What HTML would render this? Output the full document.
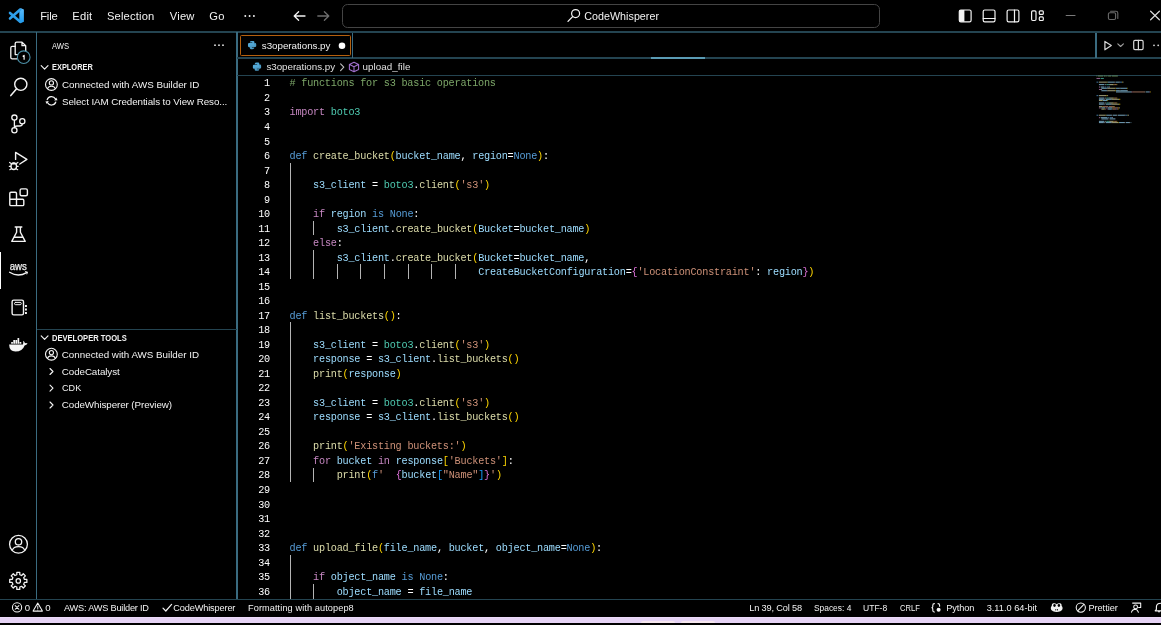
<!DOCTYPE html>
<html><head><meta charset="utf-8"><title>s3operations.py - CodeWhisperer - Visual Studio Code</title>
<style>
html,body{margin:0;padding:0;background:#000;}
body{width:1161px;height:625px;position:relative;overflow:hidden;font-family:"Liberation Sans",sans-serif;}
.t{position:absolute;white-space:pre;line-height:16px;height:16px;}
.c{position:absolute;white-space:pre;font-family:"Liberation Mono",monospace;color:#fff;}
.k{color:#c586c0}.b{color:#569cd6}.f{color:#dcdcaa}.v{color:#9cdcfe}.s{color:#ce9178}.m{color:#4ec9b0}.cm{color:#7ca668}
.b1{color:#ffd700}.b2{color:#da70d6}.b3{color:#179fff}
svg{position:absolute;left:0;top:0;}
#app{position:absolute;left:0;top:0;width:1161px;height:625px;filter:blur(0.45px);}
</style></head><body><div id="app">
<div style="position:absolute;left:-6px;top:31px;width:1173px;height:2px;background:#244451;"></div>
<div style="position:absolute;left:36px;top:32px;width:1.4px;height:568px;background:#3a6b80;"></div>
<div style="position:absolute;left:236.4px;top:32px;width:1.4px;height:568px;background:#3a6b80;"></div>
<div style="position:absolute;left:237px;top:57.4px;width:930px;height:1.6px;background:#244451;"></div>
<div style="position:absolute;left:237px;top:74.6px;width:930px;height:1.6px;background:#244451;"></div>
<div style="position:absolute;left:-6px;top:598.8px;width:1173px;height:1.6px;background:#244451;"></div>
<div style="position:absolute;left:352px;top:33px;width:1.4px;height:25px;background:#3a6b80;"></div>
<div style="position:absolute;left:1095.4px;top:33px;width:1.4px;height:25px;background:#3a6b80;"></div>
<div style="position:absolute;left:37px;top:329px;width:199.5px;height:1.4px;background:#244451;"></div>
<div style="position:absolute;left:651px;top:57px;width:54px;height:1.6px;background:#5a9bb4;"></div>
<div style="position:absolute;left:-6px;top:616.9px;width:1173px;height:6.5px;background:#e6d3f5;"></div>
<div style="position:absolute;left:-6px;top:616.8px;width:1173px;height:1.2px;background:#ecdaf9;"></div>
<div style="position:absolute;left:641px;top:620.6px;width:34px;height:2.7px;background:#f6e6ee;border-radius:2px 2px 0 0;"></div>
<div style="position:absolute;left:681px;top:620.6px;width:34px;height:2.7px;background:#f6e6ee;border-radius:2px 2px 0 0;"></div>
<div style="position:absolute;left:-3px;top:252px;width:4.4px;height:37px;background:#fff;"></div>
<div style="position:absolute;left:239.8px;top:35.4px;width:111.2px;height:20.5px;border:1.2px solid #b4600e;border-radius:1.5px;box-sizing:border-box"></div>
<div style="position:absolute;left:342.4px;top:4px;width:538px;height:23.6px;border:1.4px solid #444;border-radius:5.5px;box-sizing:border-box"></div>
<div style="position:absolute;left:0;top:0;font-size:10.2px;letter-spacing:-0.221px;line-height:14.52px">
<div class="c ln" style="left:258.00px;top:77.44px;width:12px;text-align:right">1</div>
<div class="c" style="left:289.50px;top:77.44px"><span class="cm"># functions for s3 basic operations</span></div>
<div class="c ln" style="left:258.00px;top:91.96px;width:12px;text-align:right">2</div>
<div class="c ln" style="left:258.00px;top:106.48px;width:12px;text-align:right">3</div>
<div class="c" style="left:289.50px;top:106.48px"><span class="k">import</span> <span class="m">boto3</span></div>
<div class="c ln" style="left:258.00px;top:121.00px;width:12px;text-align:right">4</div>
<div class="c ln" style="left:258.00px;top:135.52px;width:12px;text-align:right">5</div>
<div class="c ln" style="left:258.00px;top:150.04px;width:12px;text-align:right">6</div>
<div class="c" style="left:289.50px;top:150.04px"><span class="b">def</span> <span class="f">create_bucket</span><span class="b1">(</span><span class="v">bucket_name</span>, <span class="v">region</span>=<span class="b">None</span><span class="b1">)</span>:</div>
<div class="c ln" style="left:258.00px;top:164.56px;width:12px;text-align:right">7</div>
<div class="c ln" style="left:258.00px;top:179.08px;width:12px;text-align:right">8</div>
<div class="c" style="left:313.10px;top:179.08px"><span class="v">s3_client</span> = <span class="m">boto3</span>.<span class="f">client</span><span class="b1">(</span><span class="s">'s3'</span><span class="b1">)</span></div>
<div class="c ln" style="left:258.00px;top:193.60px;width:12px;text-align:right">9</div>
<div class="c ln" style="left:258.00px;top:208.12px;width:12px;text-align:right">10</div>
<div class="c" style="left:313.10px;top:208.12px"><span class="k">if</span> <span class="v">region</span> <span class="b">is</span> <span class="b">None</span>:</div>
<div class="c ln" style="left:258.00px;top:222.64px;width:12px;text-align:right">11</div>
<div class="c" style="left:336.70px;top:222.64px"><span class="v">s3_client</span>.<span class="f">create_bucket</span><span class="b1">(</span><span class="v">Bucket</span>=<span class="v">bucket_name</span><span class="b1">)</span></div>
<div class="c ln" style="left:258.00px;top:237.16px;width:12px;text-align:right">12</div>
<div class="c" style="left:313.10px;top:237.16px"><span class="k">else</span>:</div>
<div class="c ln" style="left:258.00px;top:251.68px;width:12px;text-align:right">13</div>
<div class="c" style="left:336.70px;top:251.68px"><span class="v">s3_client</span>.<span class="f">create_bucket</span><span class="b1">(</span><span class="v">Bucket</span>=<span class="v">bucket_name</span>,</div>
<div class="c ln" style="left:258.00px;top:266.20px;width:12px;text-align:right">14</div>
<div class="c" style="left:478.30px;top:266.20px"><span class="v">CreateBucketConfiguration</span>=<span class="b2">{</span><span class="s">'LocationConstraint'</span>: <span class="v">region</span><span class="b2">}</span><span class="b1">)</span></div>
<div class="c ln" style="left:258.00px;top:280.72px;width:12px;text-align:right">15</div>
<div class="c ln" style="left:258.00px;top:295.24px;width:12px;text-align:right">16</div>
<div class="c ln" style="left:258.00px;top:309.76px;width:12px;text-align:right">17</div>
<div class="c" style="left:289.50px;top:309.76px"><span class="b">def</span> <span class="f">list_buckets</span><span class="b1">()</span>:</div>
<div class="c ln" style="left:258.00px;top:324.28px;width:12px;text-align:right">18</div>
<div class="c ln" style="left:258.00px;top:338.80px;width:12px;text-align:right">19</div>
<div class="c" style="left:313.10px;top:338.80px"><span class="v">s3_client</span> = <span class="m">boto3</span>.<span class="f">client</span><span class="b1">(</span><span class="s">'s3'</span><span class="b1">)</span></div>
<div class="c ln" style="left:258.00px;top:353.32px;width:12px;text-align:right">20</div>
<div class="c" style="left:313.10px;top:353.32px"><span class="v">response</span> = <span class="v">s3_client</span>.<span class="f">list_buckets</span><span class="b1">()</span></div>
<div class="c ln" style="left:258.00px;top:367.84px;width:12px;text-align:right">21</div>
<div class="c" style="left:313.10px;top:367.84px"><span class="f">print</span><span class="b1">(</span><span class="v">response</span><span class="b1">)</span></div>
<div class="c ln" style="left:258.00px;top:382.36px;width:12px;text-align:right">22</div>
<div class="c ln" style="left:258.00px;top:396.88px;width:12px;text-align:right">23</div>
<div class="c" style="left:313.10px;top:396.88px"><span class="v">s3_client</span> = <span class="m">boto3</span>.<span class="f">client</span><span class="b1">(</span><span class="s">'s3'</span><span class="b1">)</span></div>
<div class="c ln" style="left:258.00px;top:411.40px;width:12px;text-align:right">24</div>
<div class="c" style="left:313.10px;top:411.40px"><span class="v">response</span> = <span class="v">s3_client</span>.<span class="f">list_buckets</span><span class="b1">()</span></div>
<div class="c ln" style="left:258.00px;top:425.92px;width:12px;text-align:right">25</div>
<div class="c ln" style="left:258.00px;top:440.44px;width:12px;text-align:right">26</div>
<div class="c" style="left:313.10px;top:440.44px"><span class="f">print</span><span class="b1">(</span><span class="s">'Existing buckets:'</span><span class="b1">)</span></div>
<div class="c ln" style="left:258.00px;top:454.96px;width:12px;text-align:right">27</div>
<div class="c" style="left:313.10px;top:454.96px"><span class="k">for</span> <span class="v">bucket</span> <span class="k">in</span> <span class="v">response</span><span class="b1">[</span><span class="s">'Buckets'</span><span class="b1">]</span>:</div>
<div class="c ln" style="left:258.00px;top:469.48px;width:12px;text-align:right">28</div>
<div class="c" style="left:336.70px;top:469.48px"><span class="f">print</span><span class="b1">(</span><span class="b">f</span><span class="s">'  </span><span class="b2">{</span><span class="v">bucket</span><span class="b3">[</span><span class="s">"Name"</span><span class="b3">]</span><span class="b2">}</span><span class="s">'</span><span class="b1">)</span></div>
<div class="c ln" style="left:258.00px;top:484.00px;width:12px;text-align:right">29</div>
<div class="c ln" style="left:258.00px;top:498.52px;width:12px;text-align:right">30</div>
<div class="c ln" style="left:258.00px;top:513.04px;width:12px;text-align:right">31</div>
<div class="c ln" style="left:258.00px;top:527.56px;width:12px;text-align:right">32</div>
<div class="c ln" style="left:258.00px;top:542.08px;width:12px;text-align:right">33</div>
<div class="c" style="left:289.50px;top:542.08px"><span class="b">def</span> <span class="f">upload_file</span><span class="b1">(</span><span class="v">file_name</span>, <span class="v">bucket</span>, <span class="v">object_name</span>=<span class="b">None</span><span class="b1">)</span>:</div>
<div class="c ln" style="left:258.00px;top:556.60px;width:12px;text-align:right">34</div>
<div class="c ln" style="left:258.00px;top:571.12px;width:12px;text-align:right">35</div>
<div class="c" style="left:313.10px;top:571.12px"><span class="k">if</span> <span class="v">object_name</span> <span class="b">is</span> <span class="b">None</span>:</div>
<div class="c ln" style="left:258.00px;top:585.64px;width:12px;text-align:right">36</div>
<div class="c" style="left:336.70px;top:585.64px"><span class="v">object_name</span> = <span class="v">file_name</span></div>
</div>
<div style="position:absolute;left:290px;top:162.76px;width:1.1px;height:116.16px;background:#b4b4b4;"></div>
<div style="position:absolute;left:290px;top:322.48px;width:1.1px;height:159.72px;background:#b4b4b4;"></div>
<div style="position:absolute;left:290px;top:554.8px;width:1.1px;height:44.4px;background:#b4b4b4;"></div>
<div style="position:absolute;left:313px;top:220.84px;width:1.1px;height:14.52px;background:#b4b4b4;"></div>
<div style="position:absolute;left:313px;top:249.88px;width:1.1px;height:29.04px;background:#b4b4b4;"></div>
<div style="position:absolute;left:313px;top:467.68px;width:1.1px;height:14.52px;background:#b4b4b4;"></div>
<div style="position:absolute;left:313px;top:583.84px;width:1.1px;height:15.36px;background:#b4b4b4;"></div>
<div style="position:absolute;left:337px;top:264.4px;width:1.1px;height:14.52px;background:#b4b4b4;"></div>
<div style="position:absolute;left:360px;top:264.4px;width:1.1px;height:14.52px;background:#b4b4b4;"></div>
<div style="position:absolute;left:384px;top:264.4px;width:1.1px;height:14.52px;background:#b4b4b4;"></div>
<div style="position:absolute;left:408px;top:264.4px;width:1.1px;height:14.52px;background:#b4b4b4;"></div>
<div style="position:absolute;left:431px;top:264.4px;width:1.1px;height:14.52px;background:#b4b4b4;"></div>
<div style="position:absolute;left:455px;top:264.4px;width:1.1px;height:14.52px;background:#b4b4b4;"></div>
<div class="t" style="left:40.20px;top:8.00px;font-size:11.2px;color:#f2f2f2;letter-spacing:-0.183px;">File</div>
<div class="t" style="left:72.20px;top:8.00px;font-size:11.2px;color:#f2f2f2;letter-spacing:0.255px;">Edit</div>
<div class="t" style="left:106.90px;top:8.00px;font-size:11.2px;color:#f2f2f2;letter-spacing:0.174px;">Selection</div>
<div class="t" style="left:169.70px;top:8.00px;font-size:11.2px;color:#f2f2f2;letter-spacing:0.238px;">View</div>
<div class="t" style="left:209.30px;top:8.00px;font-size:11.2px;color:#f2f2f2;letter-spacing:0.281px;">Go</div>
<div class="t" style="left:584.30px;top:7.60px;font-size:10.7px;color:#f2f2f2;letter-spacing:0.035px;">CodeWhisperer</div>
<div class="t" style="left:52.20px;top:38.00px;font-size:9.3px;color:#f2f2f2;transform:scaleX(0.8204);transform-origin:0 50%;">AWS</div>
<div class="t" style="left:52.30px;top:59.30px;font-size:8.5px;color:#f2f2f2;font-weight:700;transform:scaleX(0.8724);transform-origin:0 50%;">EXPLORER</div>
<div class="t" style="left:62.00px;top:77.00px;font-size:9.8px;color:#f2f2f2;">Connected with AWS Builder ID</div>
<div class="t" style="left:62.00px;top:93.70px;font-size:9.8px;color:#f2f2f2;letter-spacing:-0.076px;">Select IAM Credentials to View Reso...</div>
<div class="t" style="left:52.30px;top:329.50px;font-size:8.5px;color:#f2f2f2;font-weight:700;transform:scaleX(0.8901);transform-origin:0 50%;">DEVELOPER TOOLS</div>
<div class="t" style="left:61.80px;top:346.60px;font-size:9.8px;color:#f2f2f2;letter-spacing:-0.007px;">Connected with AWS Builder ID</div>
<div class="t" style="left:61.80px;top:363.50px;font-size:9.8px;color:#f2f2f2;letter-spacing:-0.084px;">CodeCatalyst</div>
<div class="t" style="left:61.80px;top:380.20px;font-size:9.8px;color:#f2f2f2;transform:scaleX(0.9281);transform-origin:0 50%;">CDK</div>
<div class="t" style="left:61.80px;top:397.00px;font-size:9.8px;color:#f2f2f2;letter-spacing:-0.089px;">CodeWhisperer (Preview)</div>
<div class="t" style="left:261.80px;top:38.00px;font-size:9.8px;color:#f2f2f2;letter-spacing:-0.038px;">s3operations.py</div>
<div class="t" style="left:266.40px;top:59.20px;font-size:9.8px;color:#e0e0e0;letter-spacing:-0.038px;">s3operations.py</div>
<div class="t" style="left:362.50px;top:59.20px;font-size:9.8px;color:#e0e0e0;letter-spacing:0.054px;">upload_file</div>
<div class="t" style="left:24.70px;top:599.80px;font-size:9.6px;color:#f2f2f2;letter-spacing:-0.044px;">0</div>
<div class="t" style="left:45.30px;top:599.80px;font-size:9.6px;color:#f2f2f2;letter-spacing:-0.044px;">0</div>
<div class="t" style="left:64.00px;top:599.80px;font-size:9.2px;color:#f2f2f2;letter-spacing:-0.204px;">AWS: AWS Builder ID</div>
<div class="t" style="left:173.30px;top:599.80px;font-size:9.2px;color:#f2f2f2;letter-spacing:-0.141px;">CodeWhisperer</div>
<div class="t" style="left:248.00px;top:599.80px;font-size:9.2px;color:#f2f2f2;letter-spacing:0.088px;">Formatting with autopep8</div>
<div class="t" style="left:749.20px;top:599.80px;font-size:9.2px;color:#f2f2f2;letter-spacing:-0.143px;">Ln 39, Col 58</div>
<div class="t" style="left:813.60px;top:599.80px;font-size:9.2px;color:#f2f2f2;transform:scaleX(0.9129);transform-origin:0 50%;">Spaces: 4</div>
<div class="t" style="left:863.20px;top:599.80px;font-size:9.2px;color:#f2f2f2;transform:scaleX(0.9297);transform-origin:0 50%;">UTF-8</div>
<div class="t" style="left:899.80px;top:599.80px;font-size:9.2px;color:#f2f2f2;transform:scaleX(0.8250);transform-origin:0 50%;">CRLF</div>
<div class="t" style="left:946.20px;top:599.80px;font-size:9.2px;color:#f2f2f2;letter-spacing:-0.068px;">Python</div>
<div class="t" style="left:986.70px;top:599.80px;font-size:9.2px;color:#f2f2f2;letter-spacing:0.007px;">3.11.0 64-bit</div>
<div class="t" style="left:1088.40px;top:599.80px;font-size:9.2px;color:#f2f2f2;letter-spacing:-0.028px;">Prettier</div>
<svg width="1161" height="625" viewBox="0 0 1161 625" fill="none" stroke-linecap="round" stroke-linejoin="round">
<g opacity="0.7" stroke="none"><rect x="1096.50" y="75.50" width="0.61" height="1.05" fill="#7ca668"/><rect x="1097.72" y="75.50" width="5.49" height="1.05" fill="#7ca668"/><rect x="1103.82" y="75.50" width="1.83" height="1.05" fill="#7ca668"/><rect x="1106.26" y="75.50" width="1.22" height="1.05" fill="#7ca668"/><rect x="1108.09" y="75.50" width="3.05" height="1.05" fill="#7ca668"/><rect x="1111.75" y="75.50" width="6.10" height="1.05" fill="#7ca668"/><rect x="1096.50" y="77.95" width="3.66" height="1.05" fill="#c586c0"/><rect x="1100.77" y="77.95" width="3.05" height="1.05" fill="#4ec9b0"/><rect x="1096.50" y="81.62" width="1.83" height="1.05" fill="#569cd6"/><rect x="1098.94" y="81.62" width="7.93" height="1.05" fill="#dcdcaa"/><rect x="1106.87" y="81.62" width="0.61" height="1.05" fill="#ffd700"/><rect x="1107.48" y="81.62" width="6.71" height="1.05" fill="#9cdcfe"/><rect x="1114.19" y="81.62" width="0.61" height="1.05" fill="#ffffff"/><rect x="1115.41" y="81.62" width="3.66" height="1.05" fill="#9cdcfe"/><rect x="1119.07" y="81.62" width="0.61" height="1.05" fill="#ffffff"/><rect x="1119.68" y="81.62" width="2.44" height="1.05" fill="#569cd6"/><rect x="1122.12" y="81.62" width="0.61" height="1.05" fill="#ffd700"/><rect x="1122.73" y="81.62" width="0.61" height="1.05" fill="#ffffff"/><rect x="1098.94" y="84.08" width="5.49" height="1.05" fill="#9cdcfe"/><rect x="1105.04" y="84.08" width="0.61" height="1.05" fill="#ffffff"/><rect x="1106.26" y="84.08" width="3.05" height="1.05" fill="#4ec9b0"/><rect x="1109.31" y="84.08" width="0.61" height="1.05" fill="#ffffff"/><rect x="1109.92" y="84.08" width="3.66" height="1.05" fill="#dcdcaa"/><rect x="1113.58" y="84.08" width="0.61" height="1.05" fill="#ffd700"/><rect x="1114.19" y="84.08" width="2.44" height="1.05" fill="#ce9178"/><rect x="1116.63" y="84.08" width="0.61" height="1.05" fill="#ffd700"/><rect x="1098.94" y="86.53" width="1.22" height="1.05" fill="#c586c0"/><rect x="1100.77" y="86.53" width="3.66" height="1.05" fill="#9cdcfe"/><rect x="1105.04" y="86.53" width="1.22" height="1.05" fill="#569cd6"/><rect x="1106.87" y="86.53" width="2.44" height="1.05" fill="#569cd6"/><rect x="1109.31" y="86.53" width="0.61" height="1.05" fill="#ffffff"/><rect x="1101.38" y="87.75" width="5.49" height="1.05" fill="#9cdcfe"/><rect x="1106.87" y="87.75" width="0.61" height="1.05" fill="#ffffff"/><rect x="1107.48" y="87.75" width="7.93" height="1.05" fill="#dcdcaa"/><rect x="1115.41" y="87.75" width="0.61" height="1.05" fill="#ffd700"/><rect x="1116.02" y="87.75" width="3.66" height="1.05" fill="#9cdcfe"/><rect x="1119.68" y="87.75" width="0.61" height="1.05" fill="#ffffff"/><rect x="1120.29" y="87.75" width="6.71" height="1.05" fill="#9cdcfe"/><rect x="1127.00" y="87.75" width="0.61" height="1.05" fill="#ffd700"/><rect x="1098.94" y="88.97" width="2.44" height="1.05" fill="#c586c0"/><rect x="1101.38" y="88.97" width="0.61" height="1.05" fill="#ffffff"/><rect x="1101.38" y="90.20" width="5.49" height="1.05" fill="#9cdcfe"/><rect x="1106.87" y="90.20" width="0.61" height="1.05" fill="#ffffff"/><rect x="1107.48" y="90.20" width="7.93" height="1.05" fill="#dcdcaa"/><rect x="1115.41" y="90.20" width="0.61" height="1.05" fill="#ffd700"/><rect x="1116.02" y="90.20" width="3.66" height="1.05" fill="#9cdcfe"/><rect x="1119.68" y="90.20" width="0.61" height="1.05" fill="#ffffff"/><rect x="1120.29" y="90.20" width="6.71" height="1.05" fill="#9cdcfe"/><rect x="1127.00" y="90.20" width="0.61" height="1.05" fill="#ffffff"/><rect x="1116.02" y="91.42" width="15.25" height="1.05" fill="#9cdcfe"/><rect x="1131.27" y="91.42" width="0.61" height="1.05" fill="#ffffff"/><rect x="1131.88" y="91.42" width="0.61" height="1.05" fill="#da70d6"/><rect x="1132.49" y="91.42" width="12.20" height="1.05" fill="#ce9178"/><rect x="1144.69" y="91.42" width="0.61" height="1.05" fill="#ffffff"/><rect x="1145.91" y="91.42" width="3.66" height="1.05" fill="#9cdcfe"/><rect x="1149.57" y="91.42" width="0.61" height="1.05" fill="#da70d6"/><rect x="1150.18" y="91.42" width="0.61" height="1.05" fill="#ffd700"/><rect x="1096.50" y="95.10" width="1.83" height="1.05" fill="#569cd6"/><rect x="1098.94" y="95.10" width="7.32" height="1.05" fill="#dcdcaa"/><rect x="1106.26" y="95.10" width="1.22" height="1.05" fill="#ffd700"/><rect x="1107.48" y="95.10" width="0.61" height="1.05" fill="#ffffff"/><rect x="1098.94" y="97.55" width="5.49" height="1.05" fill="#9cdcfe"/><rect x="1105.04" y="97.55" width="0.61" height="1.05" fill="#ffffff"/><rect x="1106.26" y="97.55" width="3.05" height="1.05" fill="#4ec9b0"/><rect x="1109.31" y="97.55" width="0.61" height="1.05" fill="#ffffff"/><rect x="1109.92" y="97.55" width="3.66" height="1.05" fill="#dcdcaa"/><rect x="1113.58" y="97.55" width="0.61" height="1.05" fill="#ffd700"/><rect x="1114.19" y="97.55" width="2.44" height="1.05" fill="#ce9178"/><rect x="1116.63" y="97.55" width="0.61" height="1.05" fill="#ffd700"/><rect x="1098.94" y="98.78" width="4.88" height="1.05" fill="#9cdcfe"/><rect x="1104.43" y="98.78" width="0.61" height="1.05" fill="#ffffff"/><rect x="1105.65" y="98.78" width="5.49" height="1.05" fill="#9cdcfe"/><rect x="1111.14" y="98.78" width="0.61" height="1.05" fill="#ffffff"/><rect x="1111.75" y="98.78" width="7.32" height="1.05" fill="#dcdcaa"/><rect x="1119.07" y="98.78" width="1.22" height="1.05" fill="#ffd700"/><rect x="1098.94" y="100.00" width="3.05" height="1.05" fill="#dcdcaa"/><rect x="1101.99" y="100.00" width="0.61" height="1.05" fill="#ffd700"/><rect x="1102.60" y="100.00" width="4.88" height="1.05" fill="#9cdcfe"/><rect x="1107.48" y="100.00" width="0.61" height="1.05" fill="#ffd700"/><rect x="1098.94" y="102.45" width="5.49" height="1.05" fill="#9cdcfe"/><rect x="1105.04" y="102.45" width="0.61" height="1.05" fill="#ffffff"/><rect x="1106.26" y="102.45" width="3.05" height="1.05" fill="#4ec9b0"/><rect x="1109.31" y="102.45" width="0.61" height="1.05" fill="#ffffff"/><rect x="1109.92" y="102.45" width="3.66" height="1.05" fill="#dcdcaa"/><rect x="1113.58" y="102.45" width="0.61" height="1.05" fill="#ffd700"/><rect x="1114.19" y="102.45" width="2.44" height="1.05" fill="#ce9178"/><rect x="1116.63" y="102.45" width="0.61" height="1.05" fill="#ffd700"/><rect x="1098.94" y="103.67" width="4.88" height="1.05" fill="#9cdcfe"/><rect x="1104.43" y="103.67" width="0.61" height="1.05" fill="#ffffff"/><rect x="1105.65" y="103.67" width="5.49" height="1.05" fill="#9cdcfe"/><rect x="1111.14" y="103.67" width="0.61" height="1.05" fill="#ffffff"/><rect x="1111.75" y="103.67" width="7.32" height="1.05" fill="#dcdcaa"/><rect x="1119.07" y="103.67" width="1.22" height="1.05" fill="#ffd700"/><rect x="1098.94" y="106.12" width="3.05" height="1.05" fill="#dcdcaa"/><rect x="1101.99" y="106.12" width="0.61" height="1.05" fill="#ffd700"/><rect x="1102.60" y="106.12" width="5.49" height="1.05" fill="#ce9178"/><rect x="1108.70" y="106.12" width="5.49" height="1.05" fill="#ce9178"/><rect x="1114.19" y="106.12" width="0.61" height="1.05" fill="#ffd700"/><rect x="1098.94" y="107.35" width="1.83" height="1.05" fill="#c586c0"/><rect x="1101.38" y="107.35" width="3.66" height="1.05" fill="#9cdcfe"/><rect x="1105.65" y="107.35" width="1.22" height="1.05" fill="#c586c0"/><rect x="1107.48" y="107.35" width="4.88" height="1.05" fill="#9cdcfe"/><rect x="1112.36" y="107.35" width="0.61" height="1.05" fill="#ffd700"/><rect x="1112.97" y="107.35" width="5.49" height="1.05" fill="#ce9178"/><rect x="1118.46" y="107.35" width="0.61" height="1.05" fill="#ffd700"/><rect x="1119.07" y="107.35" width="0.61" height="1.05" fill="#ffffff"/><rect x="1101.38" y="108.58" width="3.05" height="1.05" fill="#dcdcaa"/><rect x="1104.43" y="108.58" width="0.61" height="1.05" fill="#ffd700"/><rect x="1105.04" y="108.58" width="0.61" height="1.05" fill="#569cd6"/><rect x="1105.65" y="108.58" width="0.61" height="1.05" fill="#ce9178"/><rect x="1107.48" y="108.58" width="0.61" height="1.05" fill="#da70d6"/><rect x="1108.09" y="108.58" width="3.66" height="1.05" fill="#9cdcfe"/><rect x="1111.75" y="108.58" width="0.61" height="1.05" fill="#179fff"/><rect x="1112.36" y="108.58" width="3.66" height="1.05" fill="#ce9178"/><rect x="1116.02" y="108.58" width="0.61" height="1.05" fill="#179fff"/><rect x="1116.63" y="108.58" width="0.61" height="1.05" fill="#da70d6"/><rect x="1117.24" y="108.58" width="0.61" height="1.05" fill="#ce9178"/><rect x="1117.85" y="108.58" width="0.61" height="1.05" fill="#ffd700"/><rect x="1096.50" y="114.70" width="1.83" height="1.05" fill="#569cd6"/><rect x="1098.94" y="114.70" width="6.71" height="1.05" fill="#dcdcaa"/><rect x="1105.65" y="114.70" width="0.61" height="1.05" fill="#ffd700"/><rect x="1106.26" y="114.70" width="5.49" height="1.05" fill="#9cdcfe"/><rect x="1111.75" y="114.70" width="0.61" height="1.05" fill="#ffffff"/><rect x="1112.97" y="114.70" width="3.66" height="1.05" fill="#9cdcfe"/><rect x="1116.63" y="114.70" width="0.61" height="1.05" fill="#ffffff"/><rect x="1117.85" y="114.70" width="6.71" height="1.05" fill="#9cdcfe"/><rect x="1124.56" y="114.70" width="0.61" height="1.05" fill="#ffffff"/><rect x="1125.17" y="114.70" width="2.44" height="1.05" fill="#569cd6"/><rect x="1127.61" y="114.70" width="0.61" height="1.05" fill="#ffd700"/><rect x="1128.22" y="114.70" width="0.61" height="1.05" fill="#ffffff"/><rect x="1098.94" y="117.15" width="1.22" height="1.05" fill="#c586c0"/><rect x="1100.77" y="117.15" width="6.71" height="1.05" fill="#9cdcfe"/><rect x="1108.09" y="117.15" width="1.22" height="1.05" fill="#569cd6"/><rect x="1109.92" y="117.15" width="2.44" height="1.05" fill="#569cd6"/><rect x="1112.36" y="117.15" width="0.61" height="1.05" fill="#ffffff"/><rect x="1101.38" y="118.38" width="6.71" height="1.05" fill="#9cdcfe"/><rect x="1108.70" y="118.38" width="0.61" height="1.05" fill="#ffffff"/><rect x="1109.92" y="118.38" width="5.49" height="1.05" fill="#9cdcfe"/><rect x="1098.94" y="120.83" width="5.49" height="1.05" fill="#9cdcfe"/><rect x="1105.04" y="120.83" width="0.61" height="1.05" fill="#ffffff"/><rect x="1106.26" y="120.83" width="3.05" height="1.05" fill="#4ec9b0"/><rect x="1109.31" y="120.83" width="0.61" height="1.05" fill="#ffffff"/><rect x="1109.92" y="120.83" width="3.66" height="1.05" fill="#dcdcaa"/><rect x="1113.58" y="120.83" width="0.61" height="1.05" fill="#ffd700"/><rect x="1114.19" y="120.83" width="2.44" height="1.05" fill="#ce9178"/><rect x="1116.63" y="120.83" width="0.61" height="1.05" fill="#ffd700"/><rect x="1098.94" y="122.05" width="4.88" height="1.05" fill="#9cdcfe"/><rect x="1104.43" y="122.05" width="0.61" height="1.05" fill="#ffffff"/><rect x="1105.65" y="122.05" width="5.49" height="1.05" fill="#9cdcfe"/><rect x="1111.14" y="122.05" width="0.61" height="1.05" fill="#ffffff"/><rect x="1111.75" y="122.05" width="6.71" height="1.05" fill="#dcdcaa"/><rect x="1118.46" y="122.05" width="0.61" height="1.05" fill="#ffd700"/><rect x="1119.07" y="122.05" width="5.49" height="1.05" fill="#9cdcfe"/><rect x="1124.56" y="122.05" width="0.61" height="1.05" fill="#ffffff"/><rect x="1125.78" y="122.05" width="3.66" height="1.05" fill="#9cdcfe"/><rect x="1129.44" y="122.05" width="0.61" height="1.05" fill="#ffffff"/><rect x="1130.66" y="122.05" width="0.61" height="1.05" fill="#9cdcfe"/></g>
<defs><linearGradient id="vg" x1="0" y1="0" x2="0" y2="1"><stop offset="0" stop-color="#5cbcfb"/><stop offset="1" stop-color="#1f9cf0"/></linearGradient></defs>
<path d="M19.3 9.0 L21.0 8.2 L23.9 9.6 L23.9 21.8 L21.0 23.1 L19.3 22.3 Z" fill="url(#vg)" stroke="none" />
<path d="M10.0 12.9 L20.2 21.8" stroke="#2b9de8" stroke-width="2.6" />
<path d="M10.0 18.5 L20.2 9.6" stroke="#2f9fea" stroke-width="2.6" />
<circle cx="245.3" cy="16" r="0.95" fill="#f4f4f4"/>
<circle cx="249.6" cy="16" r="0.95" fill="#f4f4f4"/>
<circle cx="253.9" cy="16" r="0.95" fill="#f4f4f4"/>
<path d="M305 16 H294.2 M298.6 11.8 L294.2 16 L298.6 20.2" stroke="#f4f4f4" stroke-width="1.3" />
<path d="M317.8 16 H328.8 M324.4 11.8 L328.8 16 L324.4 20.2" stroke="#6e6e6e" stroke-width="1.3" />
<circle cx="575.6" cy="13.6" r="4.0" stroke="#f4f4f4" stroke-width="1.2" fill="none"/>
<path d="M572.6 16.6 L568 21.4" stroke="#f4f4f4" stroke-width="1.3" />
<rect x="959.3" y="10.0" width="11.8" height="11.8" rx="1.6" stroke="#f4f4f4" stroke-width="1.2" fill="none"/>
<path d="M959.3 11 Q959.3 10 960.3 10 H964.4 V21.8 H960.3 Q959.3 21.8 959.3 20.8 Z" fill="#f4f4f4" stroke="none" />
<rect x="983.2" y="10.0" width="11.8" height="11.8" rx="1.6" stroke="#f4f4f4" stroke-width="1.2" fill="none"/>
<path d="M983.2 18.5 H995" stroke="#f4f4f4" stroke-width="1.2" />
<rect x="1007.1" y="10.0" width="11.8" height="11.8" rx="1.6" stroke="#f4f4f4" stroke-width="1.2" fill="none"/>
<path d="M1014.5 10 V21.8" stroke="#f4f4f4" stroke-width="1.2" />
<rect x="1031.6" y="10.8" width="4.4" height="9.7" rx="1.2" stroke="#f4f4f4" stroke-width="1.2" fill="none"/>
<rect x="1039.3" y="10.8" width="4.0" height="3.6" rx="1" stroke="#f4f4f4" stroke-width="1.2" fill="none"/>
<rect x="1039.3" y="16.9" width="4.0" height="3.6" rx="1" stroke="#f4f4f4" stroke-width="1.2" fill="none"/>
<path d="M1066.2 15.5 H1075" stroke="#7a7a7a" stroke-width="1.1" />
<rect x="1108.4" y="12.7" width="7.2" height="6.8" rx="1.4" stroke="#6a6a6a" stroke-width="1.1" fill="none"/>
<path d="M1110.6 11.2 H1116 Q1117.8 11.2 1117.8 13 V18.4" stroke="#6a6a6a" stroke-width="1.1" />
<path d="M1150.6 11.2 L1159.4 19.8 M1159.4 11.2 L1150.6 19.8" stroke="#dcdcdc" stroke-width="1.2" />
<path d="M1104.9 41.4 V49.8 L1111.3 45.5 Z" stroke="#d8d8d8" stroke-width="1.2" />
<path d="M1117.8 43.8 L1120.6 46.5 L1123.4 43.8" stroke="#a0a0a0" stroke-width="1.1" />
<rect x="1133.7" y="40.4" width="9.4" height="9.2" rx="1.3" stroke="#d8d8d8" stroke-width="1.2" fill="none"/>
<path d="M1138.4 40.4 V49.6" stroke="#d8d8d8" stroke-width="1.2" />
<circle cx="1154" cy="45.3" r="0.9" fill="#d8d8d8"/>
<circle cx="1158.2" cy="45.3" r="0.9" fill="#d8d8d8"/>
<path d="M16.6 42.1 H22 L25.7 45.7 V53.5 M22 42.1 V45.7 H25.7 M15.2 54.6 V43.5 Q15.2 42.1 16.6 42.1 M15.2 54.6 H18" stroke="#f4f4f4" stroke-width="1.3" />
<path d="M15.2 46.4 H12.2 Q10.8 46.4 10.8 47.8 V57.4 Q10.8 58.8 12.2 58.8 H17" stroke="#f4f4f4" stroke-width="1.3" />
<circle cx="23.7" cy="57.2" r="6.35" stroke="#4c8fa6" stroke-width="1.1" fill="#000"/>
<path d="M22.7 56.5 L24.1 55.4 V59.7" stroke="#fff" stroke-width="1.15" stroke-linecap="butt"/>
<circle cx="20.8" cy="84.3" r="6.1" stroke="#f4f4f4" stroke-width="1.4" fill="none"/>
<path d="M16.4 88.9 L10.8 95.6" stroke="#f4f4f4" stroke-width="1.5" />
<circle cx="14.4" cy="117.6" r="2.6" stroke="#f4f4f4" stroke-width="1.3" fill="none"/>
<circle cx="14.4" cy="130.3" r="2.6" stroke="#f4f4f4" stroke-width="1.3" fill="none"/>
<circle cx="22.3" cy="121.2" r="2.6" stroke="#f4f4f4" stroke-width="1.3" fill="none"/>
<path d="M14.4 120.3 V127.6 M22.3 123.9 Q22.3 126 19.4 126 H17 Q14.6 126 14.4 127.6" stroke="#f4f4f4" stroke-width="1.3" />
<path d="M15.6 159.4 V152.4 L26.9 159.4 L19.8 164" stroke="#f4f4f4" stroke-width="1.4" />
<ellipse cx="13.75" cy="166.2" rx="2.8" ry="3.3" stroke="#f4f4f4" stroke-width="1.3" fill="none"/>
<path d="M11.1 164.6 Q11.4 162.4 13.75 162.4 Q16.1 162.4 16.4 164.6 Z" fill="#f4f4f4" stroke="none" />
<path d="M11.2 163.4 L9.6 162.4 M16.3 163.4 L17.9 162.4 M10.9 166.3 H9.3 M16.6 166.3 H18.2 M11.4 168.7 L9.8 169.7 M16.1 168.7 L17.7 169.7" stroke="#f4f4f4" stroke-width="1.15" />
<path d="M9.8 199.2 V193.4 Q9.8 192.2 11 192.2 H15.3 Q16.5 192.2 16.5 193.4 V205.6 M9.8 199.2 H22.6 Q23.8 199.2 23.8 200.4 V204.4 Q23.8 205.6 22.6 205.6 H11 Q9.8 205.6 9.8 204.4 Z" stroke="#f4f4f4" stroke-width="1.4" />
<rect x="20.1" y="188.9" width="7.3" height="6.8" rx="1.5" stroke="#f4f4f4" stroke-width="1.4" fill="none"/>
<path d="M15.2 227 H21.8 M16.6 227 V232.2 L11.8 241.4 H25.2 L20.4 232.2 V227 M13.9 237.2 H23.1" stroke="#f4f4f4" stroke-width="1.4" />
<text x="18.3" y="270.3" font-family="Liberation Sans" font-size="10" font-weight="400" fill="#ececec" text-anchor="middle" stroke="#ececec" stroke-width="0.25" textLength="17.2" lengthAdjust="spacingAndGlyphs">aws</text>
<path d="M9.6 272.3 Q18 277.6 26.6 272.6" stroke="#f4f4f4" stroke-width="1.3" />
<path d="M25.4 271.6 L27.6 272 L26.9 274" stroke="#f4f4f4" stroke-width="0.9" />
<rect x="12.1" y="300.1" width="11.4" height="14.8" rx="1.6" stroke="#f4f4f4" stroke-width="1.4" fill="none"/>
<rect x="14.5" y="302.4" width="6.8" height="2.3" rx="1.15" stroke="#f4f4f4" stroke-width="1.0" fill="none"/>
<path d="M25 305 h1.9 v1.9 h-1.9 Z" fill="#f4f4f4" stroke="none" />
<path d="M25 308.5 h1.9 v1.9 h-1.9 Z" fill="#f4f4f4" stroke="none" />
<path d="M25 312 h1.9 v1.9 h-1.9 Z" fill="#f4f4f4" stroke="none" />
<path d="M9.1 344.4 H23.0 Q23.6 342.2 23.0 340.8 Q24.6 341.6 25.0 343.2 Q26.6 342.8 27.6 343.6 Q26.6 345.4 24.6 345.4 Q22.6 351.4 15.4 351.4 Q9.4 351.4 9.1 344.4 Z" fill="#f4f4f4" stroke="none" />
<path d="M11.2 341.9 h1.7 v1.9 h-1.7 Z M13.3 340 h1.7 v3.8 h-1.7 Z M15.4 340 h1.7 v3.8 h-1.7 Z M17.5 338 h1.7 v5.8 h-1.7 Z M19.6 341.9 h1.7 v1.9 h-1.7 Z" fill="#f4f4f4" stroke="none" />
<circle cx="18.5" cy="544.3" r="8.9" stroke="#f4f4f4" stroke-width="1.3" fill="none"/>
<circle cx="18.5" cy="541.8" r="3.2" stroke="#f4f4f4" stroke-width="1.3" fill="none"/>
<path d="M12.3 550.4 Q13.4 546.6 18.5 546.6 Q23.6 546.6 24.7 550.4" stroke="#f4f4f4" stroke-width="1.3" />
<path d="M16.80 572.33 L19.80 572.33 L19.77 574.77 L21.59 575.53 L23.30 573.78 L25.42 575.90 L23.67 577.61 L24.43 579.43 L26.87 579.40 L26.87 582.40 L24.43 582.37 L23.67 584.19 L25.42 585.90 L23.30 588.02 L21.59 586.27 L19.77 587.03 L19.80 589.47 L16.80 589.47 L16.83 587.03 L15.01 586.27 L13.30 588.02 L11.18 585.90 L12.93 584.19 L12.17 582.37 L9.73 582.40 L9.73 579.40 L12.17 579.43 L12.93 577.61 L11.18 575.90 L13.30 573.78 L15.01 575.53 L16.83 574.77 Z" stroke="#f4f4f4" stroke-width="1.25" />
<circle cx="18.3" cy="580.9" r="2.2" stroke="#f4f4f4" stroke-width="1.25" fill="none"/>
<circle cx="215" cy="45.2" r="0.85" fill="#f4f4f4"/>
<circle cx="219" cy="45.2" r="0.85" fill="#f4f4f4"/>
<circle cx="223" cy="45.2" r="0.85" fill="#f4f4f4"/>
<path d="M41.2 65.7 L44.6 69.2 L48 65.7" stroke="#f4f4f4" stroke-width="1.15" />
<path d="M41.2 335.9 L44.6 339.4 L48 335.9" stroke="#f4f4f4" stroke-width="1.15" />
<circle cx="51.4" cy="84.5" r="5.9" stroke="#f4f4f4" stroke-width="1.1" fill="none"/>
<circle cx="51.4" cy="82.9" r="2.1" stroke="#f4f4f4" stroke-width="1.1" fill="none"/>
<path d="M47.5 88.7 Q48.199999999999996 86.2 51.4 86.2 Q54.6 86.2 55.3 88.7" stroke="#f4f4f4" stroke-width="1.1" />
<circle cx="51.4" cy="354.2" r="5.9" stroke="#f4f4f4" stroke-width="1.1" fill="none"/>
<circle cx="51.4" cy="352.59999999999997" r="2.1" stroke="#f4f4f4" stroke-width="1.1" fill="none"/>
<path d="M47.5 358.4 Q48.199999999999996 355.9 51.4 355.9 Q54.6 355.9 55.3 358.4" stroke="#f4f4f4" stroke-width="1.1" />
<path d="M47.2 99.6 A4.5 4.5 0 0 1 55.4 98.9 M55.8 102.0 A4.5 4.5 0 0 1 47.6 102.7" stroke="#f4f4f4" stroke-width="1.2" />
<path d="M54.2 100.6 L57.6 100.2 L56.2 97.6 Z M48.8 101.0 L45.4 101.4 L46.8 104 Z" fill="#f4f4f4" stroke="none" />
<path d="M50 368.5 L53 371.5 L50 374.5" stroke="#f4f4f4" stroke-width="1.1" />
<path d="M50 385.2 L53 388.2 L50 391.2" stroke="#f4f4f4" stroke-width="1.1" />
<path d="M50 402 L53 405 L50 408" stroke="#f4f4f4" stroke-width="1.1" />
<g transform="translate(252.1 45.1) scale(0.96)" fill="#52a8d6" stroke="none"><path d="M-0.3 -4.3 H1.2 Q2.4 -4.3 2.4 -3.1 V-0.6 Q2.4 0.5 1.3 0.5 H-1.3 Q-2.2 0.5 -2.2 1.4 V2.2 H-3.1 Q-4.3 2.2 -4.3 1 V-0.9 Q-4.3 -2.1 -3.1 -2.1 H0.2 V-2.6 H-2.3 V-3.1 Q-2.3 -4.3 -0.3 -4.3 Z"/><path d="M0.3 4.3 H-1.2 Q-2.4 4.3 -2.4 3.1 V0.6 Q-2.4 -0.5 -1.3 -0.5 H1.3 Q2.2 -0.5 2.2 -1.4 V-2.2 H3.1 Q4.3 -2.2 4.3 -1 V0.9 Q4.3 2.1 3.1 2.1 H-0.2 V2.6 H2.3 V3.1 Q2.3 4.3 0.3 4.3 Z" opacity="0.92"/></g>
<g transform="translate(257 66.7) scale(0.96)" fill="#52a8d6" stroke="none"><path d="M-0.3 -4.3 H1.2 Q2.4 -4.3 2.4 -3.1 V-0.6 Q2.4 0.5 1.3 0.5 H-1.3 Q-2.2 0.5 -2.2 1.4 V2.2 H-3.1 Q-4.3 2.2 -4.3 1 V-0.9 Q-4.3 -2.1 -3.1 -2.1 H0.2 V-2.6 H-2.3 V-3.1 Q-2.3 -4.3 -0.3 -4.3 Z"/><path d="M0.3 4.3 H-1.2 Q-2.4 4.3 -2.4 3.1 V0.6 Q-2.4 -0.5 -1.3 -0.5 H1.3 Q2.2 -0.5 2.2 -1.4 V-2.2 H3.1 Q4.3 -2.2 4.3 -1 V0.9 Q4.3 2.1 3.1 2.1 H-0.2 V2.6 H2.3 V3.1 Q2.3 4.3 0.3 4.3 Z" opacity="0.92"/></g>
<circle cx="342" cy="45.7" r="3.3" fill="#fff"/>
<path d="M340.6 63.8 L343.8 67.2 L340.6 70.6" stroke="#c0c0c0" stroke-width="1.1" />
<path d="M354 62.2 L358.6 64.4 V69.6 L354 71.8 L349.4 69.6 V64.4 Z M349.6 64.5 L354 66.7 L358.4 64.5 M354 66.7 V71.6" stroke="#9f6fcb" stroke-width="1.1" />
<circle cx="17.05" cy="607.4" r="4.6" stroke="#f4f4f4" stroke-width="1.05" fill="none"/>
<path d="M15.2 605.55 L18.9 609.25 M18.9 605.55 L15.2 609.25" stroke="#f4f4f4" stroke-width="1.05" />
<path d="M37.75 603.1 L42.4 611.1 H33.1 Z" stroke="#f4f4f4" stroke-width="1.05" />
<path d="M37.75 606 V608.6" stroke="#f4f4f4" stroke-width="0.9" />
<circle cx="37.75" cy="609.9" r="0.5" fill="#f4f4f4"/>
<path d="M163 608.2 L165.8 611 L171.6 604.4" stroke="#f4f4f4" stroke-width="1.2" />
<path d="M934.4 603.6 Q932.8 603.6 932.8 605.2 V606.6 Q932.8 607.7 931.8 607.8 Q932.8 607.9 932.8 609 V610.4 Q932.8 612 934.4 612" stroke="#f4f4f4" stroke-width="1.1" />
<path d="M938 603.6 Q939.6 603.6 939.6 605.2 V606.2" stroke="#f4f4f4" stroke-width="1.1" />
<circle cx="938.6" cy="609.8" r="2" fill="#f4f4f4"/>
<path d="M1053.2 603.3 Q1051.6 603.6 1051.7 606.0 Q1050.7 606.6 1050.8 608.6 Q1050.8 610.2 1053.0 611.2 Q1056.7 612.8 1060.4 611.2 Q1062.6 610.2 1062.6 608.6 Q1062.7 606.6 1061.7 606.0 Q1061.8 603.6 1060.2 603.3 Q1058 602.9 1056.7 604.2 Q1055.4 602.9 1053.2 603.3 Z" fill="#f0f0f0" stroke="none" />
<ellipse cx="1054.5" cy="605.5" rx="1.25" ry="1.45" fill="#000"/><ellipse cx="1058.9" cy="605.5" rx="1.25" ry="1.45" fill="#000"/>
<path d="M1055.4 608.9 h0.8 v1.5 h-0.8 Z M1057.2 608.9 h0.8 v1.5 h-0.8 Z" fill="#000" stroke="none" />
<circle cx="1080.8" cy="607.6" r="4.6" stroke="#f4f4f4" stroke-width="1.05" fill="none"/>
<path d="M1077.7 610.8 L1083.9 604.4" stroke="#f4f4f4" stroke-width="1.05" />
<circle cx="1135.6" cy="606.9" r="1.9" stroke="#f4f4f4" stroke-width="1.05" fill="none"/>
<path d="M1131.5 612.2 Q1132.2 609.2 1135.6 609.2 M1135.6 609.2 Q1137.4 609.4 1138.4 612.2" stroke="#f4f4f4" stroke-width="1.05" />
<path d="M1132.6 603.1 H1140.7 V607.4 H1138.6" stroke="#f4f4f4" stroke-width="1.05" />
<path d="M1161 603.2 Q1156.4 603.2 1156.4 607 V609.4 L1155.2 610.8 H1161" stroke="#f4f4f4" stroke-width="1.15" />
<circle cx="1159" cy="611.6" r="0.9" fill="#f4f4f4"/>
</svg>
</div></body></html>
